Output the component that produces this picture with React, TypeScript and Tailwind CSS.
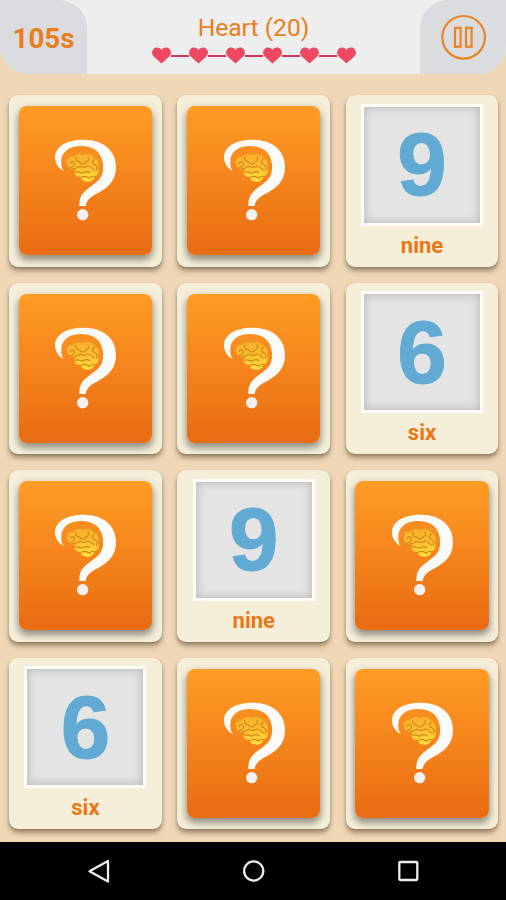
import React from 'react';

interface CardData {
  digit?: string;
  word?: string;
}

const cards: CardData[] = [
  {},
  {},
  { digit: '9', word: 'nine' },
  {},
  {},
  { digit: '6', word: 'six' },
  {},
  { digit: '9', word: 'nine' },
  {},
  { digit: '6', word: 'six' },
  {},
  {},
];

const HeartIcon: React.FC = () => (
  <svg className="block h-[17px] w-[19px]" viewBox="0 0 19 17">
    <path
      d="M9.5 16.4L1.5 9.2C-.5 7-.3 3.7 1.6 1.9C3.7-.1 7.5.1 9.5 3C11.5.1 15.3-.1 17.4 1.9C19.3 3.7 19.5 7 17.5 9.2Z"
      fill="#ed4762"
    />
  </svg>
);

const Hearts: React.FC = () => (
  <div className="flex items-center">
    {[0, 1, 2, 3, 4, 5].map((i) => (
      <React.Fragment key={i}>
        {i > 0 && <div className="h-[2px] w-[18px] bg-[#d23454]" />}
        <HeartIcon />
      </React.Fragment>
    ))}
  </div>
);

const QuestionMark: React.FC = () => (
  <svg className="h-[100px] w-[80px]" viewBox="0 0 240 300">
    <path
      d="M56 123C40 115 30 99 30 82C30 50 64 29 116 29C178 29 213 64 213 110C213 160 180 178 148 195C131 206 124 214 122 228H103C102 194 116 184 148 161C169 146 176 130 174 104C171 68 148 48 108 48C73 48 50 66 49 92C48 104 50 115 56 123Z"
      fill="#fcfaf8"
    />
    <circle cx="113" cy="254" r="17" fill="#f4f1f0" />
    <path
      d="M65 103C60 90 69 78 83 79C91 69 107 69 114 73C128 66 144 72 149 82C161 87 166 103 161 116C163 130 156 137 149 139C146 152 132 159 121 154C111 153 107 146 109 140C97 142 87 136 89 126C90 122 92 120 94 118C82 121 76 119 77 112C69 113 66 108 65 103Z"
      fill="url(#brain)"
    />
    <g fill="none" stroke="#cd8b1c" strokeWidth="3.6" strokeLinecap="round" strokeLinejoin="round">
      <path d="M68 107C61 90 70 79 83 80C93 69 107 70 114 74C128 67 144 73 149 83C161 88 164 103 160 116" strokeWidth="2.5" opacity=".6" />
      <path d="M77 112C88 111 91 103 86 97C81 93 75 96 76 101" />
      <path d="M92 82C90 91 97 96 103 95C107 104 120 104 122 96C130 94 133 87 129 82" />
      <path d="M81 117C94 118 99 108 108 109C115 115 122 112 129 108C138 108 142 114 147 120" />
      <path d="M148 88C139 93 143 104 151 105C157 108 157 115 154 121" />
      <path d="M92 127C102 121 106 131 115 129C121 125 128 123 134 128" />
      <path d="M111 141C121 136 128 141 134 145C137 139 142 138 148 139" />
    </g>
    <defs>
      <linearGradient id="brain" x1="0" y1="0" x2="0" y2="1">
        <stop offset="0" stopColor="#fbae2a" />
        <stop offset="0.5" stopColor="#fdbd2e" />
        <stop offset="1" stopColor="#ffe33f" />
      </linearGradient>
    </defs>
  </svg>
);

const Card: React.FC<CardData> = ({ digit, word }) => (
  <div className="h-[171.5px] w-[152.5px] rounded-[9px] bg-[#f5efda] shadow-[0_4px_5px_rgba(85,65,40,0.5),0_1px_2px_rgba(85,65,40,0.25)]">
    {digit ? (
      <div className="flex flex-col items-center pt-[8.5px]">
        <div className="flex h-[122px] w-[122px] border-[3px] border-[#fffdf9] bg-[#e4e4e4]">
          <div className="flex flex-1 items-center justify-center shadow-[inset_0_0_9px_1px_rgba(110,110,110,0.36)]">
            <span className="pb-px font-['Liberation_Sans',sans-serif] text-[89px] leading-[116px] font-bold text-[#60aad3] [-webkit-text-stroke:1px_#60aad3]">
              {digit}
            </span>
          </div>
        </div>
        <div className="mt-[6px] text-[22px] leading-[28px] font-bold text-[#ea7817]">{word}</div>
      </div>
    ) : (
      <div className="px-[9.5px] pt-[11px]">
        <div className="flex h-[149px] justify-center rounded-[8px] bg-linear-to-b from-[#ff9c25] to-[#e96b12] pt-[24.4px] shadow-[0_4px_7px_1px_rgba(80,80,70,0.6)]">
          <QuestionMark />
        </div>
      </div>
    )}
  </div>
);

const Header: React.FC = () => (
  <header className="flex h-[74px] justify-between overflow-hidden rounded-b-[28px] bg-[#eeeeee]">
    <div className="flex w-[87px] items-center justify-center rounded-tr-[28px] bg-[#dbdce0] pt-[4px] text-[27.8px] leading-none font-bold text-[#ea7d1c]">
      105s
    </div>
    <div className="flex flex-col items-center pt-[13px]">
      <div className="text-[24.6px] leading-[29px] text-[#ea7d1c]">Heart (20)</div>
      <div className="mt-[5px]">
        <Hearts />
      </div>
    </div>
    <div className="flex w-[86px] items-center justify-center rounded-tl-[28px] bg-[#dbdce0]">
      <svg className="h-[46px] w-[46px]" viewBox="0 0 46 46" fill="none" stroke="#ea8424" strokeWidth="2.2">
        <circle cx="23.6" cy="23.3" r="21.3" />
        <rect x="15" y="13.8" width="5.6" height="19" />
        <rect x="26" y="13.8" width="5.6" height="19" />
      </svg>
    </div>
  </header>
);

const NavBar: React.FC = () => (
  <nav className="flex h-[58px] items-center justify-between bg-black px-[86px]">
    <svg className="h-[26px] w-[26px]" viewBox="0 0 26 26" fill="none" stroke="#eeeeee" strokeWidth="2.3" strokeLinejoin="round">
      <path d="M22 3V23.5L3.5 13.2Z" />
    </svg>
    <svg className="h-[26px] w-[26px]" viewBox="0 0 26 26" fill="none" stroke="#eeeeee" strokeWidth="2.3">
      <circle cx="13.7" cy="13" r="9.6" />
    </svg>
    <svg className="h-[26px] w-[26px]" viewBox="0 0 26 26" fill="none" stroke="#eeeeee" strokeWidth="2.3">
      <rect x="5.3" y="4" width="18" height="18" rx="1" />
    </svg>
  </nav>
);

const App: React.FC = () => {
  return (
    <div className="flex h-[900px] w-[506px] flex-col overflow-hidden bg-[#efd7b8] font-[Roboto,sans-serif]">
      <Header />
      <main className="grid h-[768px] grid-cols-[repeat(3,152.5px)] content-start gap-x-[15.8px] gap-y-[16px] pt-[21px] pl-[9.2px]">
        {cards.map((card, i) => (
          <Card key={i} digit={card.digit} word={card.word} />
        ))}
      </main>
      <NavBar />
    </div>
  );
};

export default App;
